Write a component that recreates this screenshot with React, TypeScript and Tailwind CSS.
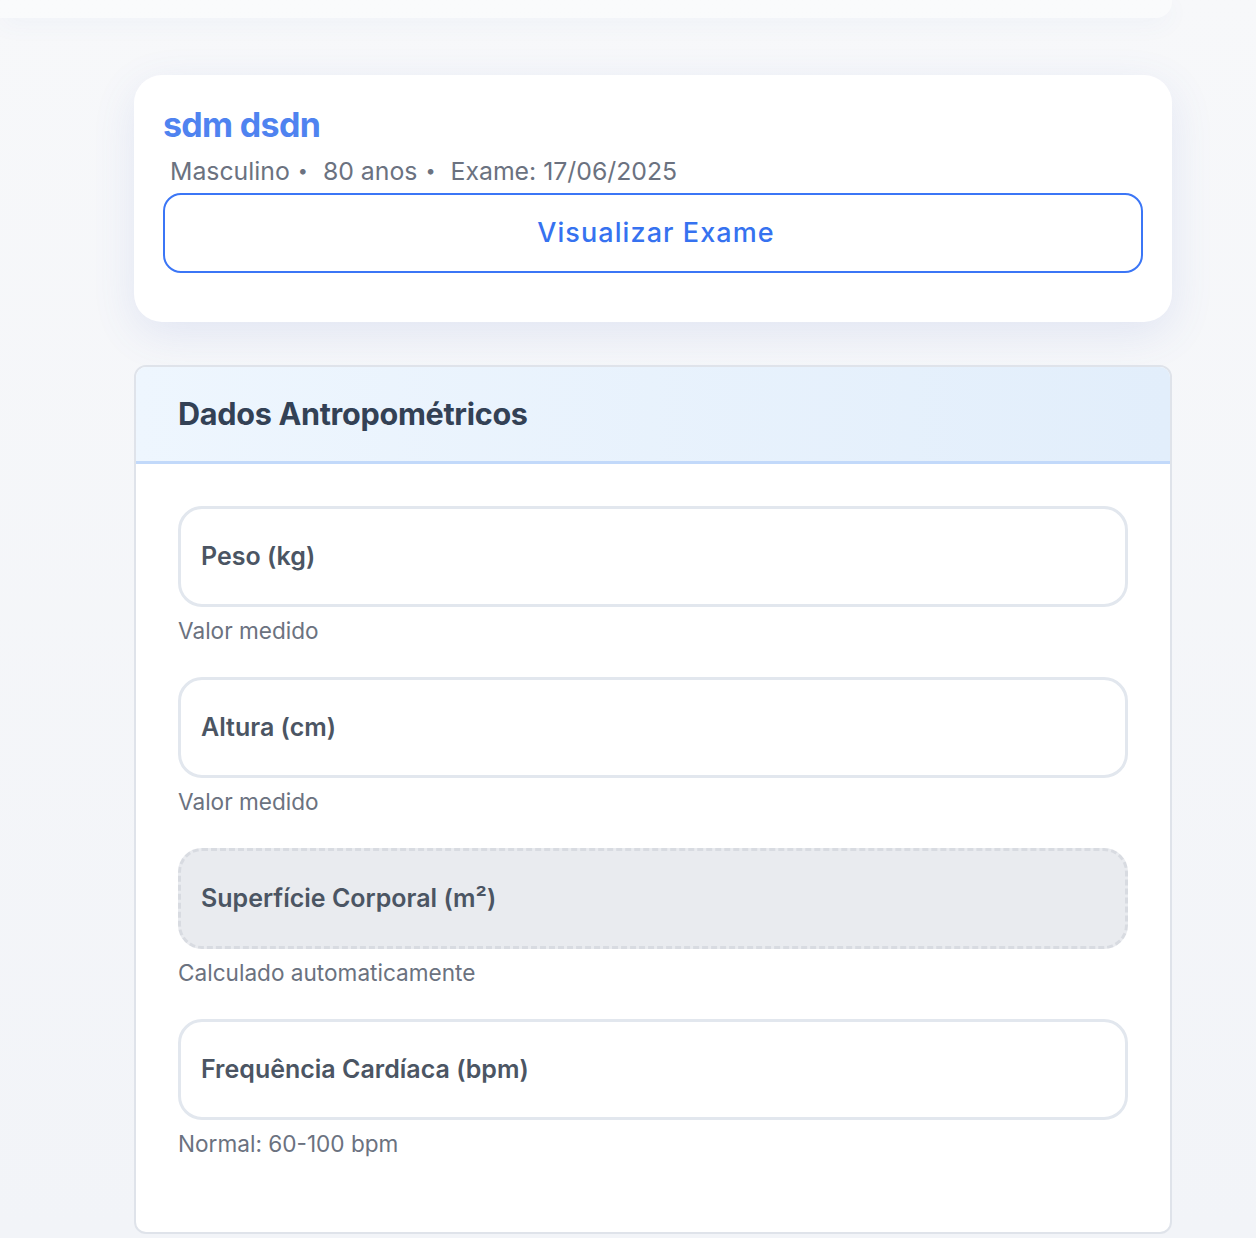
const fields = [
  { label: 'Peso (kg)', hint: 'Valor medido', computed: false },
  { label: 'Altura (cm)', hint: 'Valor medido', computed: false },
  { label: 'Superfície Corporal (m²)', hint: 'Calculado automaticamente', computed: true },
  { label: 'Frequência Cardíaca (bpm)', hint: 'Normal: 60-100 bpm', computed: false },
];

function PatientCard() {
  return (
    <div className="rounded-[28px] bg-white px-[29px] pt-[30px] pb-[49px] shadow-[0_12px_44px_rgba(79,110,200,0.12)]">
      <h1 className="text-[34px] leading-[40px] font-bold tracking-[-0.02em] text-[#4f83f0]">sdm dsdn</h1>
      <div className="mt-[11px] flex items-center pl-[7px] text-[24.8px] leading-[30px] text-[#6b7280]">
        <span>Masculino</span>
        <span className="mx-[8px] text-[18px]">•</span>
        <span className="ml-[7px]">80 anos</span>
        <span className="mx-[8px] text-[18px]">•</span>
        <span className="ml-[7px]">Exame: 17/06/2025</span>
      </div>
      <button className="mt-[7px] flex h-[80px] w-full items-center justify-center rounded-[18px] border-2 border-[#3b76f6] bg-white pl-[6px] text-[27px] font-medium tracking-[0.04em] text-[#3672f0]">
        Visualizar Exame
      </button>
    </div>
  );
}

function Field({ label, hint, computed }: { label: string; hint: string; computed: boolean }) {
  return (
    <div>
      <div
        className={
          computed
            ? 'flex h-[101px] items-center rounded-[24px] border-[3px] border-dashed border-[#d8dbe1] bg-[#e9ebef] px-[20px]'
            : 'flex h-[101px] items-center rounded-[24px] border-[3px] border-[#e2e7ee] bg-white px-[20px]'
        }
      >
        <span className="text-[25px] font-semibold text-[#4b5563]">{label}</span>
      </div>
      <p className="mt-[10px] text-[22.6px] leading-[28px] text-[#6b7280]">{hint}</p>
    </div>
  );
}

export default function App() {
  return (
    <div className="min-h-[1238px] bg-gradient-to-b from-[#f7f8fa] to-[#f2f4f8] font-['Inter',sans-serif]">
      <div className="h-[18px] w-[1172px] rounded-br-[16px] bg-white/40 shadow-[0_6px_24px_rgba(79,110,200,0.05)]" />
      <div className="ml-[134px] w-[1038px] pt-[57px]">
        <PatientCard />
        <section className="mt-[43px] overflow-hidden rounded-[12px] border-2 border-[#dfe3ea] bg-white">
          <div className="flex h-[97px] items-center border-b-[3px] border-[#c2d9fa] bg-gradient-to-r from-[#eef6fe] to-[#e2eefb] px-[42px]">
            <h2 className="text-[30.6px] font-bold tracking-[-0.01em] text-[#334155]">Dados Antropométricos</h2>
          </div>
          <div className="flex flex-col gap-[32px] px-[42px] pt-[42px] pb-[74px]">
            {fields.map((f) => (
              <Field key={f.label} {...f} />
            ))}
          </div>
        </section>
      </div>
    </div>
  );
}
